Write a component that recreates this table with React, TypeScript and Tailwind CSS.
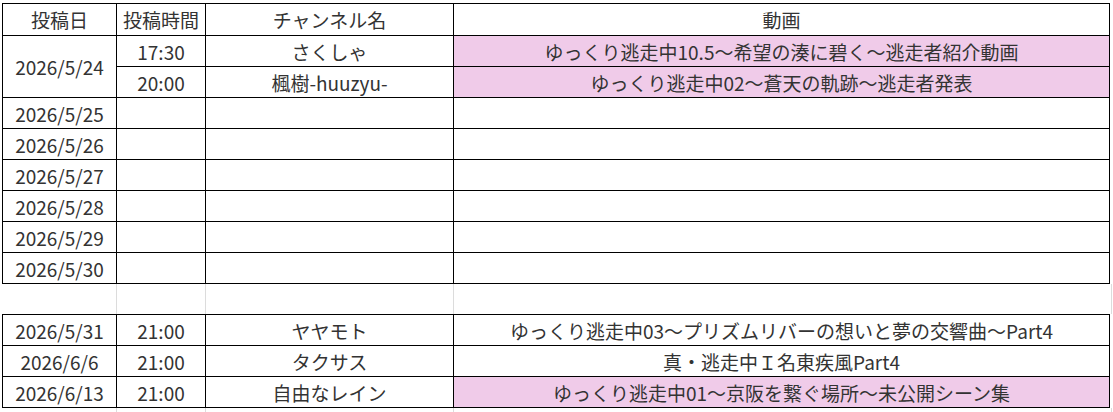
import React from "react";

type Row = {
  date?: string;
  time: string;
  channel: string;
  video: string;
  pink?: boolean;
};

const cell =
  "flex items-center justify-center border-r border-b border-black whitespace-nowrap overflow-hidden";

const upcoming: Row[] = [
  { date: "2026/5/25", time: "", channel: "", video: "" },
  { date: "2026/5/26", time: "", channel: "", video: "" },
  { date: "2026/5/27", time: "", channel: "", video: "" },
  { date: "2026/5/28", time: "", channel: "", video: "" },
  { date: "2026/5/29", time: "", channel: "", video: "" },
  { date: "2026/5/30", time: "", channel: "", video: "" },
];

const later: Row[] = [
  {
    date: "2026/5/31",
    time: "21:00",
    channel: "ヤヤモト",
    video: "ゆっくり逃走中03～プリズムリバーの想いと夢の交響曲～Part4",
  },
  { date: "2026/6/6", time: "21:00", channel: "タクサス", video: "真・逃走中Ｉ名東疾風Part4" },
  {
    date: "2026/6/13",
    time: "21:00",
    channel: "自由なレイン",
    video: "ゆっくり逃走中01～京阪を繋ぐ場所～未公開シーン集",
    pink: true,
  },
];

function RowCells({ row }: { row: Row }) {
  return (
    <>
      <div className={cell}>{row.date}</div>
      <div className={cell}>{row.time}</div>
      <div className={cell}>{row.channel}</div>
      <div className={`${cell} ${row.pink ? "bg-[#f0cbe9]" : ""}`}>{row.video}</div>
    </>
  );
}

// faint spreadsheet gridlines between the two bordered blocks
function GapRow({ h }: { h: string }) {
  return (
    <div className={`grid ${h} grid-cols-[1px_114px_89px_248px_656px_2px]`}>
      <div />
      <div className="border-r border-[#dcdcdc]" />
      <div className="border-r border-[#dcdcdc]" />
      <div className="border-r border-[#dcdcdc]" />
      <div />
      <div className="border-r border-[#dcdcdc]" />
    </div>
  );
}

export default function App() {
  return (
    <div
      className="h-[412px] w-[1113px] bg-white text-[19px] leading-none text-[#333333]"
      style={{ fontFamily: '"Noto Sans CJK JP", "Noto Sans", sans-serif' }}
    >
      <div className="ml-[2px] pt-[3px] w-[1108px]">
        <div className="grid grid-cols-[114px_89px_248px_656px] grid-rows-[32px_repeat(8,31px)] border-l border-t border-black">
          <div className={cell}>投稿日</div>
          <div className={cell}>投稿時間</div>
          <div className={cell}>チャンネル名</div>
          <div className={cell}>動画</div>

          <div className={`${cell} row-span-2`}>2026/5/24</div>
          <div className={cell}>17:30</div>
          <div className={cell}>さくしゃ</div>
          <div className={`${cell} bg-[#f0cbe9]`}>ゆっくり逃走中10.5～希望の湊に碧く～逃走者紹介動画</div>
          <div className={cell}>20:00</div>
          <div className={cell}>楓樹-huuzyu-</div>
          <div className={`${cell} bg-[#f0cbe9]`}>ゆっくり逃走中02～蒼天の軌跡～逃走者発表</div>

          {upcoming.map((r) => (
            <RowCells key={r.date} row={r} />
          ))}
        </div>

        <GapRow h="h-[30px]" />

        <div className="grid grid-cols-[114px_89px_248px_656px] auto-rows-[31px] border-l border-t border-black">
          {later.map((r) => (
            <RowCells key={r.date} row={r} />
          ))}
        </div>

        <GapRow h="h-[5px]" />
      </div>
    </div>
  );
}
